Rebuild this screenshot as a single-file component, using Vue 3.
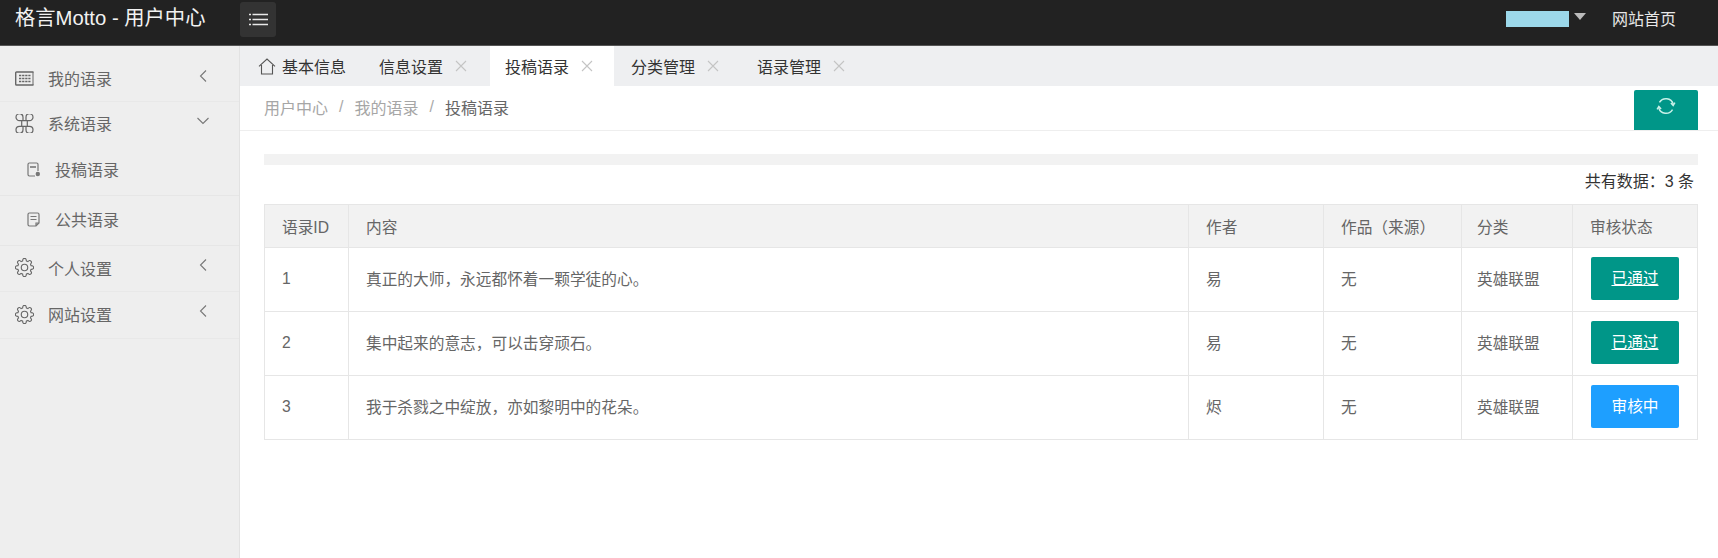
<script setup>
const navTop = [
  { label: '我的语录', icon: 'table' },
  { label: '系统语录', icon: 'cmd', open: true },
]
const navBottom = [
  { label: '个人设置', icon: 'gear' },
  { label: '网站设置', icon: 'gear' },
]
const subNav = ['投稿语录', '公共语录']
const tabs = [
  { label: '信息设置' },
  { label: '投稿语录', active: true },
  { label: '分类管理' },
  { label: '语录管理' },
]
const rows = [
  { id: 1, text: '真正的大师，永远都怀着一颗学徒的心。', author: '易', status: '已通过', ok: true },
  { id: 2, text: '集中起来的意志，可以击穿顽石。', author: '易', status: '已通过', ok: true },
  { id: 3, text: '我于杀戮之中绽放，亦如黎明中的花朵。', author: '烬', status: '审核中', ok: false },
]

// eight rounded teeth round the centre of a 20x20 box
function gearPath() {
  let d = ''
  for (let i = 0; i < 8; i++) {
    const a = (i * Math.PI) / 4
    const pt = (r, da) => {
      const x = 10 + r * Math.cos(a + da)
      const y = 10 + r * Math.sin(a + da)
      return `${x.toFixed(2)} ${y.toFixed(2)}`
    }
    d += `${i === 0 ? 'M' : 'L'}${pt(7.2, -0.27)} Q${pt(9.8, -0.2)} ${pt(9.6, 0)} Q${pt(9.8, 0.2)} ${pt(7.2, 0.27)} `
  }
  return d + 'Z'
}
const gear = gearPath()
</script>

<template>
  <div class="page">
    <header class="topbar">
      <div class="brand">格言Motto - 用户中心</div>
      <button class="menu-btn">
        <svg width="19" height="13" viewBox="0 0 19 13" fill="none" stroke="#e8e8e8" stroke-width="1.4">
          <path d="M0 1.500h2M3.500 1.500H19M0 6.500h2M3.500 6.500H19M0 11.500h2M3.500 11.500H19" />
        </svg>
      </button>
      <div class="top-right">
        <span class="redacted"></span>
        <span class="caret"></span>
        <span class="home-link">网站首页</span>
      </div>
    </header>

    <div class="body">
      <aside class="sidebar">
        <div v-for="n in navTop" :key="n.label" class="nav-item" :class="{ first: n.icon === 'table', open: n.open }">
          <svg v-if="n.icon === 'table'" class="nav-icon" viewBox="0 0 19 15" fill="none" stroke="#666">
            <path d="M18.500 1H1.500a.8.800 0 0 0-.8.800v11.400a.8.800 0 0 0 .8.800h17" stroke-width="1.400" />
            <path d="M18 1v13" stroke-width="1" />
            <path d="M4 4.500h11.500M4 7.500h11.500M4 10.500h11.500" stroke-width="1.500" stroke-dasharray="2.300 .8" />
          </svg>
          <svg v-else class="nav-icon" viewBox="0 0 19 19" fill="none" stroke="#666" stroke-width="1.200">
            <path d="M6.700 6.700h5.600v5.600H6.700z" />
            <path d="M6.700 6.700H4.500a3.500 3.500 0 1 1 3.500-3.500V6.700M12.300 6.700h2.200a3.500 3.500 0 1 0-3.500-3.500V6.700M6.700 12.300H4.500a3.500 3.500 0 1 0 3.500 3.500V12.300M12.300 12.300h2.200a3.500 3.500 0 1 1-3.500 3.500V12.300" />
          </svg>
          <span class="nav-label">{{ n.label }}</span>
          <svg class="chevron" :class="{ down: n.open }" viewBox="0 0 8 14" fill="none" stroke="#777" stroke-width="1.100">
            <path d="M7 1.500 1.500 7 7 12.500" />
          </svg>
        </div>

        <div v-for="(s, i) in subNav" :key="s" class="sub-item" :class="{ second: i === 1 }">
          <svg class="sub-icon" viewBox="0 0 14 15" fill="none" stroke="#777" stroke-width="1.200">
            <template v-if="i === 0">
              <path d="M8 14H2.400A1.400 1.400 0 0 1 1 12.600V2.400A1.400 1.400 0 0 1 2.400 1h7.200A1.400 1.400 0 0 1 11 2.400V9" />
              <path d="M3 5h6" stroke-width="1.600" />
              <circle cx="10.800" cy="12" r="2.200" fill="#777" stroke="none" />
            </template>
            <template v-else>
              <path d="M9 14H2.400A1.400 1.400 0 0 1 1 12.600V2.400A1.400 1.400 0 0 1 2.400 1h8.200A1.400 1.400 0 0 1 12 2.400V11zM9 14v-3h3" />
              <path d="M3.500 4.500h6M3.500 7.500h6" />
            </template>
          </svg>
          <span>{{ s }}</span>
        </div>

        <div v-for="n in navBottom" :key="n.label" class="nav-item bottom">
          <svg class="nav-icon" viewBox="0 0 20 20" fill="none" stroke="#666" stroke-width="1.200">
            <path :d="gear" stroke-linejoin="round" />
            <circle cx="10" cy="10" r="3.400" />
          </svg>
          <span class="nav-label">{{ n.label }}</span>
          <svg class="chevron" viewBox="0 0 8 14" fill="none" stroke="#777" stroke-width="1.100">
            <path d="M7 1.500 1.500 7 7 12.500" />
          </svg>
        </div>
      </aside>

      <main class="main">
        <div class="tabs">
          <div class="tab home">
            <svg width="18" height="17" viewBox="0 0 18 17" fill="none" stroke="#555" stroke-width="1.100">
              <path d="M1 8.300 9 1l8 7.300M3.500 7v9h11V7" />
            </svg>
            <span>基本信息</span>
          </div>
          <div v-for="t in tabs" :key="t.label" class="tab" :class="{ active: t.active }">
            <span>{{ t.label }}</span>
            <svg class="close" width="12" height="12" viewBox="0 0 12 12" stroke="#c4c4c4" stroke-width="1.100">
              <path d="M1 1l10 10M11 1 1 11" />
            </svg>
          </div>
        </div>

        <div class="crumbs">
          <span>用户中心</span><i>/</i><span>我的语录</span><i>/</i><span class="current">投稿语录</span>
          <button class="refresh">
            <svg width="20" height="20" viewBox="0 0 22 22" fill="none" stroke="#c8f0e8" stroke-width="1.600">
              <path d="M3.800 7A8.400 8.400 0 0 1 19 8.800M18.200 15A8.400 8.400 0 0 1 3 13.200" />
              <path d="M16.400 7.600 18.900 10.500 20.800 7.400M5.600 14.400 3.100 11.500 1.200 14.600" />
            </svg>
          </button>
        </div>

        <div class="content">
          <div class="strip"></div>
          <div class="count">共有数据：3 条</div>
          <table class="grid">
            <colgroup>
              <col class="c-id" /><col /><col class="c-author" /><col class="c-work" /><col class="c-cat" /><col class="c-status" />
            </colgroup>
            <thead>
              <tr>
                <th>语录ID</th><th>内容</th><th>作者</th><th>作品（来源）</th><th>分类</th><th>审核状态</th>
              </tr>
            </thead>
            <tbody>
              <tr v-for="r in rows" :key="r.id">
                <td>{{ r.id }}</td>
                <td>{{ r.text }}</td>
                <td>{{ r.author }}</td>
                <td>无</td>
                <td>英雄联盟</td>
                <td>
                  <span class="status" :class="r.ok ? 'ok' : 'pending'">{{ r.status }}</span>
                </td>
              </tr>
            </tbody>
          </table>
        </div>
      </main>
    </div>
  </div>
</template>

<style>
html, body { margin: 0; background: #fff; }
</style>

<style scoped>
.page {
  height: 558px;
  display: flex;
  flex-direction: column;
  font-family: "Liberation Sans", "Noto Sans CJK SC", sans-serif;
  font-size: 16px;
  color: #666;
  overflow: hidden;
}

.topbar {
  height: 45px;
  flex: none;
  display: flex;
  align-items: flex-start;
  background: #222;
  border-bottom: 1px solid #555;
}
.brand {
  width: 240px;
  padding-left: 15px;
  box-sizing: border-box;
  color: #f2f2f2;
  font-size: 20.3px;
  line-height: 37px;
  white-space: nowrap;
}
.menu-btn {
  margin-top: 2px;
  width: 36px;
  height: 35px;
  display: flex;
  align-items: center;
  justify-content: center;
  padding: 0;
  border: 0;
  border-radius: 3px;
  background: #333;
}
.top-right {
  margin-left: auto;
  padding-right: 42px;
  height: 36px;
  display: flex;
  align-items: center;
  color: #e8e8e8;
}
.redacted {
  width: 63px;
  height: 16px;
  background: #9cd8ea;
  margin-top: 2px;
}
.caret {
  margin: -3px 0 0 5px;
  border: 6.5px solid transparent;
  border-top: 7px solid #bbb;
  border-bottom: 0;
}
.home-link { margin-left: 26px; }

.body {
  flex: 1;
  display: flex;
  min-height: 0;
}

.sidebar {
  width: 240px;
  flex: none;
  background: #eee;
  border-right: 1px solid #e2e2e2;
  box-sizing: border-box;
}
.nav-item {
  height: 45px;
  display: flex;
  align-items: center;
  padding-left: 15px;
  position: relative;
  border-bottom: 1px solid #e8e8e8;
  box-sizing: border-box;
}
.nav-item.first {
  height: 56px;
  padding-top: 9px;
}
.nav-item.open {
  height: 46px;
  padding-bottom: 4px;
  border-bottom: 0;
}
.nav-item.bottom {
  height: 46px;
  padding-bottom: 2px;
}
.nav-item.bottom:last-child { height: 47px; }
.nav-icon {
  width: 19px;
  height: 19px;
  flex: none;
  margin-right: 14px;
}
.nav-label { color: #666; }
.chevron {
  position: absolute;
  left: 199px;
  top: 12px;
  width: 8px;
  height: 14px;
}
.nav-item.first .chevron { top: 23px; }
.chevron.down {
  left: 199px;
  top: 12px;
  transform: rotate(-90deg);
}
.sub-item {
  height: 48px;
  display: flex;
  align-items: center;
  padding-left: 27px;
  padding-bottom: 5px;
  box-sizing: border-box;
  border-bottom: 1px solid #e6e6e6;
}
.sub-item.second {
  height: 50px;
  padding-bottom: 3px;
}
.sub-icon {
  width: 14px;
  height: 15px;
  margin-right: 14px;
  flex: none;
}

.main {
  flex: 1;
  min-width: 0;
  display: flex;
  flex-direction: column;
}
.tabs {
  height: 40px;
  flex: none;
  display: flex;
  background: #eeeff1;
  color: #333;
}
.tab {
  width: 124px;
  margin-right: 2px;
  box-sizing: border-box;
  padding-left: 15px;
  display: flex;
  align-items: center;
  gap: 12px;
}
.tab.home {
  margin-right: 0;
  padding-left: 18px;
  gap: 6px;
}
.tab.active { background: #fff; }
.crumbs {
  height: 45px;
  flex: none;
  display: flex;
  align-items: center;
  padding: 0 0 3px 24px;
  border-bottom: 1px solid #eee;
  box-sizing: border-box;
  color: #a6a6a6;
  position: relative;
}
.crumbs i {
  font-style: normal;
  margin: 0 11px;
  color: #aaa;
}
.crumbs .current { color: #666; }
.refresh {
  position: absolute;
  right: 20px;
  top: 4px;
  width: 64px;
  height: 40px;
  padding: 0 0 9px;
  border: 0;
  border-radius: 2px 2px 0 0;
  background: #009688;
  display: flex;
  align-items: center;
  justify-content: center;
}

.content {
  padding: 23px 20px 0 24px;
}
.strip {
  height: 11px;
  background: #f2f2f2;
}
.count {
  height: 39px;
  line-height: 34px;
  text-align: right;
  padding-right: 4px;
  color: #333;
}
.grid {
  width: 100%;
  table-layout: fixed;
  border-collapse: collapse;
  font-size: 15.7px;
  color: #666;
}
.c-id { width: 84px; }
.c-author { width: 135px; }
.c-work { width: 138px; }
.c-cat { width: 111px; }
.c-status { width: 125px; }
.grid th, .grid td {
  border: 1px solid #e6e6e6;
  padding: 0 0 0 17px;
  text-align: left;
  font-weight: 400;
  white-space: nowrap;
}
.grid th:nth-child(5), .grid td:nth-child(5) { padding-left: 15px; }
.grid th {
  height: 42px;
  background: #f2f2f2;
}
.grid td {
  height: 61px;
  padding-bottom: 2px;
}
.grid td:last-child { padding-left: 18px; }
.status {
  display: block;
  width: 88px;
  height: 43px;
  line-height: 43px;
  text-align: center;
  color: #fff;
  border-radius: 2px;
}
.status.ok {
  background: #009688;
  text-decoration: underline;
}
.status.pending { background: #1e9fff; }
</style>
